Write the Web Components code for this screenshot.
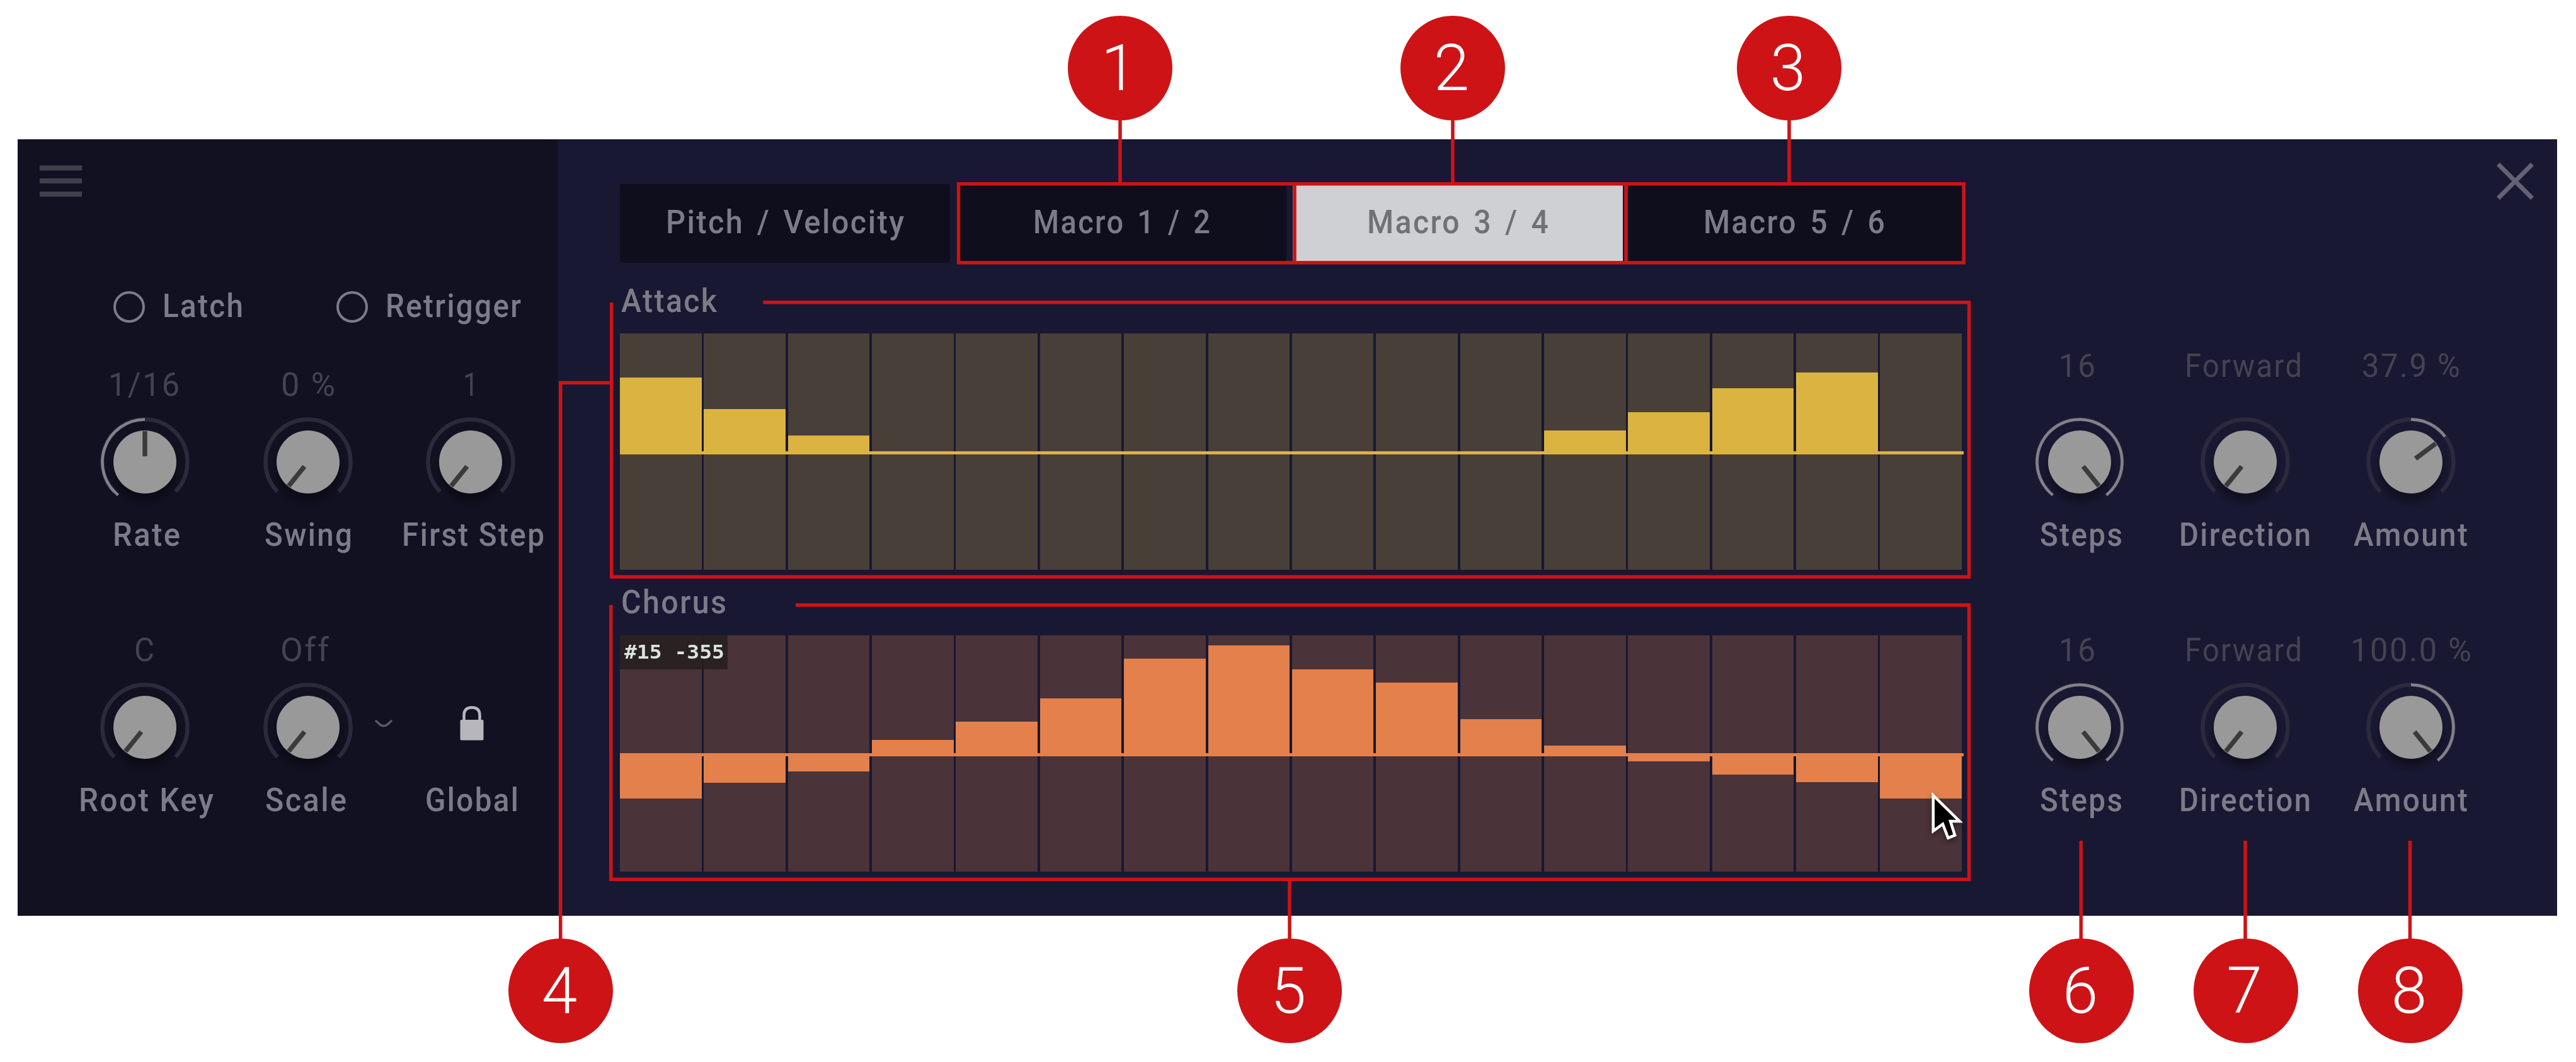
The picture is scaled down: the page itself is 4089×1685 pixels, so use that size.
<!DOCTYPE html>
<html lang="en">
<head>
<meta charset="utf-8">
<title>Arpeggiator - Macro sequencer</title>
<style>
    body {
        margin: 0;
        background: #fff;
        font-family: Roboto, "Liberation Sans", sans-serif;
        font-size: 52px;
        font-weight: 500;
        line-height: 60px;
        color: #7c7c89;
    }
</style>
</head>
<body>

<arp-page></arp-page>

<script>
// one line of text, squeezed to a given width
class FitLabel extends HTMLElement {
    constructor() {
        super();
        const shadow = this.attachShadow({ mode: "open" });
        shadow.innerHTML = /* html */ `
        <style>
            :host {
                display: block;
                height: 60px;
                white-space: nowrap;
                letter-spacing: 0.05em;
            }

            span {
                display: inline-block;
                transform-origin: 0 50%;
            }
        </style>
        <span><slot></slot></span>
        `;
    }

    connectedCallback() {
        const width = Number(this.getAttribute('width')) + 4;
        const span = this.shadowRoot.querySelector('span');
        const spacing = parseFloat(getComputedStyle(this).letterSpacing) || 0;
        const natural = span.getBoundingClientRect().width - spacing;

        this.style.width = width + 'px';
        span.style.transform = `scaleX(${width / natural})`;
    }
}


class KnobControl extends HTMLElement {
    constructor() {
        super();
        this.attachShadow({ mode: "open" });
    }

    connectedCallback() {
        const get = (name) => this.getAttribute(name);
        const angle = Number(get('angle'));
        const from = get('from');
        const shift = get('shift') || 0;
        const valueShift = get('value-shift') || 0;

        this.shadowRoot.innerHTML = /* html */ `
        <style>
            :host {
                display: flex;
                flex-direction: column;
                align-items: center;
            }

            .value {
                position: relative;
                left: ${valueShift}px;
                color: #434351;
                font-weight: 400;
                margin-bottom: var(--value-gap, 12px);
            }

            .dial {
                width: 160px;
                height: 160px;
                overflow: visible;
                margin-bottom: 6px;
            }

            .label {
                position: relative;
                left: ${shift}px;
            }
        </style>
        <fit-label class="value" width="${get('value-width')}">${get('value')}</fit-label>
        <svg class="dial" viewBox="-80 -80 160 160">
            <defs>
                <radialGradient id="shade">
                    <stop offset="0.55" stop-color="#000" stop-opacity="0.45"/>
                    <stop offset="1" stop-color="#000" stop-opacity="0"/>
                </radialGradient>
            </defs>
            <ellipse cx="0" cy="14" rx="60" ry="60" fill="url(#shade)"/>
            <path d="${this.arc(-134, 134)}" fill="none" stroke="#2a2a3c" stroke-width="6.5"/>
            ${from === null ? '' : `<path d="${this.arc(Number(from), angle)}" fill="none" stroke="#82828b" stroke-width="4.5"/>`}
            <circle r="50" fill="#999"/>
            <path d="M0 -9V-49" stroke="#3b3b3b" stroke-width="7.5" transform="rotate(${angle})"/>
            ${this.hasAttribute('menu') ? '<path d="M107 -11L114 -4.5Q120 0 126 -4.5L133 -11" fill="none" stroke="#5a5a68" stroke-width="3.5"/>' : ''}
        </svg>
        <fit-label class="label" width="${get('label-width')}">${get('label')}</fit-label>
        `;
    }

    // angles are in degrees, 0 is straight up
    arc(a, b) {
        const r = 67.5;
        const point = (deg) => {
            const t = deg * Math.PI / 180;
            return `${(r * Math.sin(t)).toFixed(2)} ${(-r * Math.cos(t)).toFixed(2)}`;
        };
        return `M${point(a)}A${r} ${r} 0 ${b - a > 180 ? 1 : 0} 1 ${point(b)}`;
    }
}


class LockControl extends HTMLElement {
    constructor() {
        super();
        const shadow = this.attachShadow({ mode: "open" });
        shadow.innerHTML = /* html */ `
        <style>
            :host {
                display: flex;
                flex-direction: column;
                align-items: center;
                padding: 72px 0 0 3px;
            }

            svg {
                width: 160px;
                height: 160px;
                margin-bottom: 6px;
            }
        </style>
        <svg viewBox="-80 -80 160 160">
            <rect x="-18.5" y="-12" width="37" height="32.5" rx="2" fill="#b7b6bd"/>
            <path d="M-12.5 -11V-19Q-12.5 -31.5 0 -31.5T12.5 -19V-11" fill="none" stroke="#b7b6bd" stroke-width="4.5"/>
        </svg>
        <slot></slot>
        `;
    }
}


class RadioOption extends HTMLElement {
    constructor() {
        super();
        const shadow = this.attachShadow({ mode: "open" });
        shadow.innerHTML = /* html */ `
        <style>
            :host {
                display: flex;
                align-items: center;
                gap: 28px;
                height: 50px;
            }

            .ring {
                box-sizing: border-box;
                width: 50px;
                height: 50px;
                border: 4px solid #7c7c89;
                border-radius: 50%;
            }

            .text {
                padding-bottom: 2px;
            }
        </style>
        <div class="ring"></div>
        <div class="text"><slot></slot></div>
        `;
    }
}


class ArpSidebar extends HTMLElement {
    constructor() {
        super();
        const shadow = this.attachShadow({ mode: "open" });
        shadow.innerHTML = /* html */ `
        <style>
            :host {
                display: block;
                box-sizing: border-box;
                width: 857px;
                padding-top: 41px;
                background: #111122;
            }

            .menu {
                display: block;
                width: 67px;
                height: 50px;
                margin-left: 35px;
            }

            .options {
                display: flex;
                gap: 148px;
                margin: 150px 0 69px 152px;
            }

            .knobs {
                display: grid;
                grid-template-columns: repeat(3, 258.5px);
                row-gap: 123px;
                margin-left: 73px;
            }
        </style>
        <svg class="menu" viewBox="0 0 67 50">
            <path d="M0 4.5H67M0 25H67M0 46H67" stroke="#40404d" stroke-width="8"/>
        </svg>
        <div class="options">
            <radio-option><fit-label width="124">Latch</fit-label></radio-option>
            <radio-option><fit-label width="211">Retrigger</fit-label></radio-option>
        </div>
        <div class="knobs">
            <knob-control value="1/16" value-width="109" value-shift="-2" label="Rate" label-width="103" angle="0" from="-141" shift="2"></knob-control>
            <knob-control value="0 %" value-width="82" label="Swing" label-width="135" angle="-141" shift="1"></knob-control>
            <knob-control value="1" value-width="20" label="First Step" label-width="222" angle="-141" shift="4"></knob-control>
            <knob-control value="C" value-width="28" value-shift="-1" label="Root Key" label-width="210" angle="-141" shift="2"></knob-control>
            <knob-control value="Off" value-width="73" value-shift="-5" label="Scale" label-width="125" angle="-141" shift="-3" menu></knob-control>
            <lock-control><fit-label width="144">Global</fit-label></lock-control>
        </div>
        `;
    }
}


class TabButton extends HTMLElement {
    constructor() {
        super();
        const shadow = this.attachShadow({ mode: "open" });
        shadow.innerHTML = /* html */ `
        <style>
            :host {
                display: flex;
                flex: 1;
                justify-content: center;
                align-items: center;
                box-sizing: border-box;
                height: 125px;
                padding-bottom: 4px;
                border-radius: 4px;
                background: #0e0e1d;
                word-spacing: 0.12em;
            }

            :host([active]) {
                background: #cfd0d4;
                color: #717175;
            }
        </style>
        <slot></slot>
        `;
    }
}


class StepLane extends HTMLElement {
    constructor() {
        super();
        const shadow = this.attachShadow({ mode: "open" });
        shadow.innerHTML = /* html */ `
        <style>
            :host {
                display: block;
            }

            .title {
                margin: 0 0 var(--title-gap) 2px;
            }

            .grid {
                position: relative;
                display: grid;
                grid-template-columns: repeat(16, 1fr);
                column-gap: 3.8px;
                height: 375px;
            }

            .cell {
                background: var(--cell);
            }

            .bar {
                background: var(--bar);
            }

            /* zero line, lies over the cells */
            .zero {
                position: absolute;
                left: 0;
                right: -3px;
                top: 187px;
                height: 5px;
                background: var(--bar);
            }
        </style>
        <div class="title"><slot></slot></div>
        <div class="grid">
            <div class="zero"></div>
            <slot name="tip"></slot>
        </div>
        `;
    }

    connectedCallback() {
        const grid = this.shadowRoot.querySelector('.grid');
        const zero = this.shadowRoot.querySelector('.zero');
        const values = this.getAttribute('steps').split(',').map(Number);

        for (const value of values) {
            const cell = document.createElement('div');
            cell.className = 'cell';
            cell.style.display = 'flow-root';

            if (value !== 0) {
                const bar = document.createElement('div');
                bar.className = 'bar';
                bar.style.marginTop = (187 - Math.max(value, 0)) + 'px';
                bar.style.height = (Math.abs(value) + 5) + 'px';
                cell.appendChild(bar);
            }

            grid.insertBefore(cell, zero);
        }
    }
}


class ValueTip extends HTMLElement {
    constructor() {
        super();
        const shadow = this.attachShadow({ mode: "open" });
        shadow.innerHTML = /* html */ `
        <style>
            :host {
                position: absolute;
                left: 0;
                top: 0;
                box-sizing: border-box;
                width: 171px;
                height: 54px;
                padding-left: 7px;
                background: rgba(38, 31, 31, 0.88);
                color: #d9e3e0;
                font: bold 30px/54px "DejaVu Sans Mono", monospace;
            }

            ::slotted(*) {
                letter-spacing: 0 !important;
            }
        </style>
        <slot></slot>
        `;
    }
}


class StepEditor extends HTMLElement {
    constructor() {
        super();
        const shadow = this.attachShadow({ mode: "open" });
        shadow.innerHTML = /* html */ `
        <style>
            :host {
                display: block;
                width: 2130px;
                padding: 71px 0 0 99px;
            }

            .tabs {
                display: flex;
                gap: 10px;
                margin-bottom: 31px;
            }

            .attack {
                --cell: #483f38;
                --bar: #dbb341;
                --title-gap: 21px;
                margin-bottom: 22px;
            }

            .chorus {
                --cell: #4a3339;
                --bar: #e3804b;
                --title-gap: 22px;
            }
        </style>
        <div class="tabs">
            <tab-button><fit-label width="374">Pitch / Velocity</fit-label></tab-button>
            <tab-button><fit-label width="277">Macro 1 / 2</fit-label></tab-button>
            <tab-button active><fit-label width="284">Macro 3 / 4</fit-label></tab-button>
            <tab-button style="padding-right: 4px"><fit-label width="284">Macro 5 / 6</fit-label></tab-button>
        </div>
        <step-lane class="attack" steps="117,67,25,0,0,0,0,0,0,0,0,33,62,100,125,0">
            <fit-label width="148">Attack</fit-label>
        </step-lane>
        <step-lane class="chorus" steps="-67,-42,-24,21,50,87,150,171,133,112,54,12,-8,-29,-41,-67">
            <fit-label width="163">Chorus</fit-label>
            <value-tip slot="tip"><fit-label width="155" style="height: 54px">#15 -355</fit-label></value-tip>
        </step-lane>
        `;
    }
}


class LaneControls extends HTMLElement {
    constructor() {
        super();
        const shadow = this.attachShadow({ mode: "open" });
        shadow.innerHTML = /* html */ `
        <style>
            :host {
                display: flex;
                flex-direction: column;
                flex: 1;
                padding: 37px 0 0 55px;
            }

            .close {
                align-self: flex-end;
                width: 59px;
                height: 59px;
                margin-right: 37px;
            }

            .row {
                display: grid;
                grid-template-columns: repeat(3, 263px);
                margin-top: 123px;
            }

            .first {
                --value-gap: 42px;
                margin-top: 234px;
            }
        </style>
        <svg class="close" viewBox="0 0 59 59">
            <path d="M2.5 2.5L56.5 56.5M56.5 2.5L2.5 56.5" stroke="#626274" stroke-width="7"/>
        </svg>
        <div class="row first">
            <knob-control value="16" value-width="54" value-shift="-4" label="Steps" label-width="127" angle="141" from="-141" shift="3"></knob-control>
            <knob-control value="Forward" value-width="182" value-shift="-3" label="Direction" label-width="205" angle="-141"></knob-control>
            <knob-control value="37.9 %" value-width="152" label="Amount" label-width="177" angle="53.4" from="0"></knob-control>
        </div>
        <div class="row">
            <knob-control value="16" value-width="54" value-shift="-4" label="Steps" label-width="127" angle="141" from="-141" shift="3"></knob-control>
            <knob-control value="Forward" value-width="182" value-shift="-3" label="Direction" label-width="205" angle="-141"></knob-control>
            <knob-control value="100.0 %" value-width="188" label="Amount" label-width="177" angle="141" from="0"></knob-control>
        </div>
        `;
    }
}


class CalloutBadge extends HTMLElement {
    constructor() {
        super();
        const shadow = this.attachShadow({ mode: "open" });
        shadow.innerHTML = /* html */ `
        <style>
            :host {
                position: absolute;
                display: flex;
                justify-content: center;
                align-items: center;
                box-sizing: border-box;
                width: 166px;
                height: 166px;
                padding-right: 4px;
                margin: -83px 0 0 -83px;
                border-radius: 50%;
                background: #cd1316;
                color: #fff;
                font-size: 102px;
                font-weight: 300;
                line-height: 166px;
            }
        </style>
        <slot></slot>
        `;
    }

    connectedCallback() {
        this.style.left = this.getAttribute('x') + 'px';
        this.style.top = this.getAttribute('y') + 'px';
    }
}


// numbered markers and frames drawn over the panel
class CalloutLayer extends HTMLElement {
    constructor() {
        super();
        const shadow = this.attachShadow({ mode: "open" });
        shadow.innerHTML = /* html */ `
        <style>
            :host {
                position: absolute;
                inset: 0;
            }

            svg {
                display: block;
                width: 4089px;
                height: 1685px;
            }
        </style>
        <svg viewBox="0 0 4089 1685" fill="none" stroke="#cd1316" stroke-width="5.5">
            <path d="M1521.5 291.75H3117.25V416.75H1521.5Z"/>
            <path d="M2055 292V417M2581 292V417"/>
            <path d="M1778 185V292M2306 185V292M2840 185V292"/>
            <path d="M970.75 480V915.25H3125.5V479.75H1211.5"/>
            <path d="M969.75 960V1395.25H3125.5V960H1263"/>
            <path d="M971 607.25H889.75V1495"/>
            <path d="M2047 1395V1495"/>
            <path d="M3303.25 1334V1495M3564 1334V1495M3825.5 1334V1495"/>
        </svg>
        <callout-badge x="1778" y="108">1</callout-badge>
        <callout-badge x="2306" y="108">2</callout-badge>
        <callout-badge x="2840" y="108">3</callout-badge>
        <callout-badge x="890" y="1572">4</callout-badge>
        <callout-badge x="2047" y="1572">5</callout-badge>
        <callout-badge x="3304" y="1572">6</callout-badge>
        <callout-badge x="3564.5" y="1572">7</callout-badge>
        <callout-badge x="3826" y="1572">8</callout-badge>
        `;
    }
}


class MousePointer extends HTMLElement {
    constructor() {
        super();
        const shadow = this.attachShadow({ mode: "open" });
        shadow.innerHTML = /* html */ `
        <style>
            :host {
                position: absolute;
                left: 3060px;
                top: 1250px;
            }

            svg {
                display: block;
                filter: drop-shadow(0 4px 4px rgba(0, 0, 0, 0.4));
            }
        </style>
        <svg width="64" height="90" viewBox="0 0 64 90">
            <path d="M8.7 12L50.5 53H36L43 75.2L32.4 79.5L23.8 57.5L8.7 68.5Z" fill="#000" stroke="#fff" stroke-width="4.5"/>
        </svg>
        `;
    }
}


class ArpPage extends HTMLElement {
    constructor() {
        super();
        const shadow = this.attachShadow({ mode: "open" });
        shadow.innerHTML = /* html */ `
        <style>
            :host {
                display: block;
                position: relative;
                box-sizing: border-box;
                width: 4089px;
                height: 1685px;
                padding: 221px 30px 0 28px;
                overflow: hidden;
            }

            .panel {
                display: flex;
                height: 1232px;
                background: #181832;
            }
        </style>
        <div class="panel">
            <arp-sidebar></arp-sidebar>
            <step-editor></step-editor>
            <lane-controls></lane-controls>
        </div>
        <callout-layer></callout-layer>
        <mouse-pointer></mouse-pointer>
        `;
    }
}

customElements.define("fit-label", FitLabel);
customElements.define("knob-control", KnobControl);
customElements.define("lock-control", LockControl);
customElements.define("radio-option", RadioOption);
customElements.define("tab-button", TabButton);
customElements.define("value-tip", ValueTip);
customElements.define("step-lane", StepLane);
customElements.define("arp-sidebar", ArpSidebar);
customElements.define("step-editor", StepEditor);
customElements.define("lane-controls", LaneControls);
customElements.define("callout-badge", CalloutBadge);
customElements.define("callout-layer", CalloutLayer);
customElements.define("mouse-pointer", MousePointer);
customElements.define("arp-page", ArpPage);
</script>
</body>
</html>
